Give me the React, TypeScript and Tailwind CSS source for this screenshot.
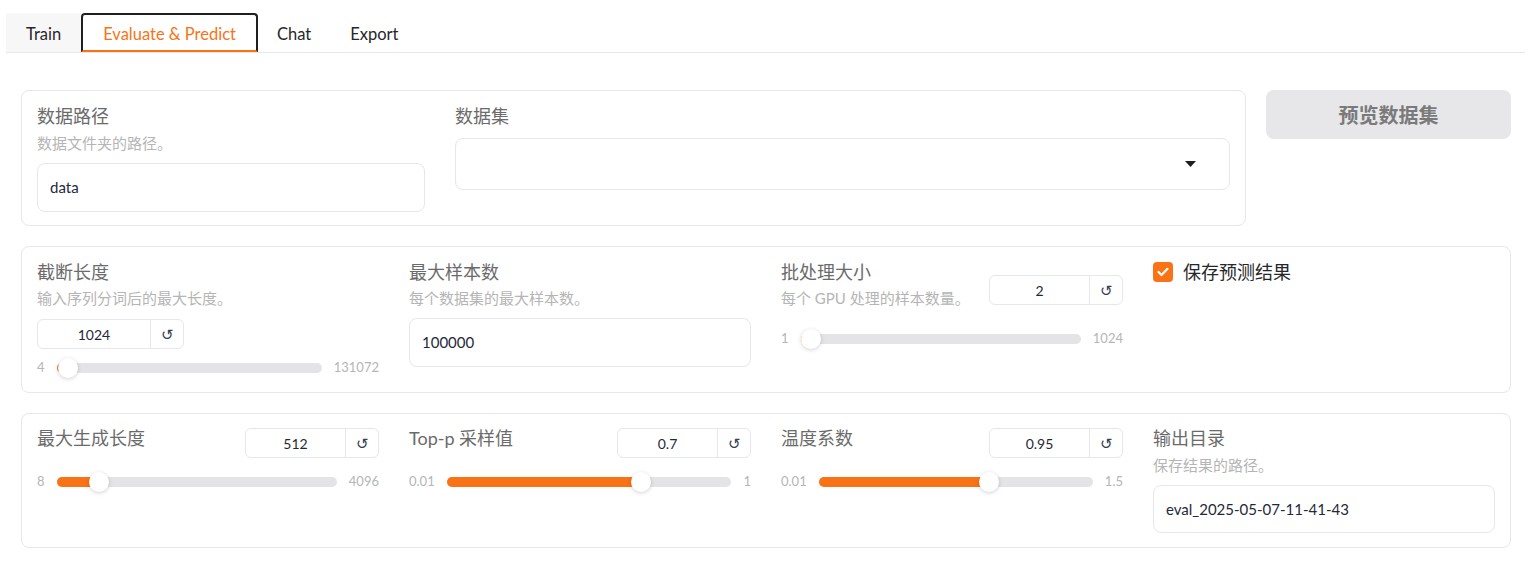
import React from 'react'

const font = { fontFamily: 'Lato, "Noto Sans CJK SC", sans-serif' }

function Label({ children }: { children: React.ReactNode }) {
  return <div className="text-[18px] leading-[22px] text-[#6b6b6b]">{children}</div>
}

function Info({ children, className = '' }: { children: React.ReactNode; className?: string }) {
  return <div className={`text-[15px] leading-[20px] text-[#b5b5b5] ${className}`}>{children}</div>
}

function NumberBox({ value, className = '' }: { value: string; className?: string }) {
  return (
    <div className={`flex h-[30px] w-[134px] shrink-0 rounded-md border border-[#e5e7eb] bg-white ${className}`}>
      <div className="flex flex-1 items-center justify-center text-[14px] text-[#1f2937]">{value}</div>
      <div className="flex w-[33px] items-center justify-center border-l border-[#e5e7eb] text-[15px] text-[#374151]">↺</div>
    </div>
  )
}

function Slider({ min, max, pct, className = '' }: { min: string; max: string; pct: number; className?: string }) {
  return (
    <div className={`flex h-[20px] items-center gap-[12px] text-[13px] text-[#b5b5b5] ${className}`}>
      <span>{min}</span>
      <div className="relative h-[10px] flex-1 rounded-full bg-[#e4e4e7]">
        <div
          className="absolute left-0 top-0 h-[10px] rounded-full bg-[#f97316]"
          style={{ width: `calc(${pct * 100}% - ${pct * 20}px + 10px)` }}
        />
        <div
          className="absolute top-[-5px] h-[20px] w-[20px] rounded-full bg-white shadow-[0_1px_4px_rgba(0,0,0,0.18)]"
          style={{ left: `calc(${pct * 100}% - ${pct * 20}px)` }}
        />
      </div>
      <span>{max}</span>
    </div>
  )
}

function TextInput({ value, className = '' }: { value: string; className?: string }) {
  return (
    <div className={`flex items-center rounded-lg border border-[#e5e7eb] bg-white px-[12px] text-[15px] text-[#1f2937] ${className}`}>
      {value}
    </div>
  )
}

export default function App() {
  return (
    <div className="min-h-screen bg-white pt-[13px]" style={font}>
      {/* Tabs */}
      <div className="mx-[6px] mr-[5px] flex border-b border-[#e5e7eb] text-[16.5px]">
        <div className="flex h-[39px] items-center bg-[#f7f7f8] px-[20px] pt-[3px] text-[#27272a]">Train</div>
        <div className="flex h-[39px] items-center rounded-t-[4px] border-2 border-[#1f1f1f] border-b-[#f97316] px-[20px] pt-[3px] text-[#f97316]">
          Evaluate &amp; Predict
        </div>
        <div className="flex h-[39px] items-center px-[19px] pt-[3px] text-[#27272a]">Chat</div>
        <div className="flex h-[39px] items-center px-[20px] pt-[3px] text-[#27272a]">Export</div>
      </div>

      <div className="mt-[37px] flex flex-col gap-[20px] pl-[21px] pr-[19px]">
        {/* Row 1 */}
        <div className="flex gap-[20px]">
          <div className="flex flex-1 gap-[30px] rounded-lg border border-[#e5e7eb] px-[15px] pb-[13px] pt-[14px]">
            <div className="w-[388px]">
              <Label>数据路径</Label>
              <Info className="mt-[6px]">数据文件夹的路径。</Info>
              <TextInput value="data" className="mt-[10px] h-[49px]" />
            </div>
            <div className="flex-1">
              <Label>数据集</Label>
              <div className="mt-[11px] flex h-[52px] items-center justify-end rounded-lg border border-[#e5e7eb] pr-[33px]">
                <svg width="11" height="6" viewBox="0 0 11 6">
                  <path d="M0 0 L11 0 L5.5 6 Z" fill="#1f1f1f" />
                </svg>
              </div>
            </div>
          </div>
          <div className="w-[245px]">
            <div className="flex h-[49px] items-center justify-center rounded-lg bg-[#e7e7e9] text-[20px] font-bold text-[#7a7a7a]">
              预览数据集
            </div>
          </div>
        </div>

        {/* Row 2 */}
        <div className="grid grid-cols-4 gap-[30px] rounded-lg border border-[#e5e7eb] px-[15px] pb-[14px] pt-[14px]">
          <div>
            <Label>截断长度</Label>
            <Info className="mt-[5px]">输入序列分词后的最大长度。</Info>
            <NumberBox value="1024" className="mt-[11px] w-[147px]" />
            <Slider min="4" max="131072" pct={(1024 - 4) / (131072 - 4)} className="mt-[9px]" />
          </div>
          <div>
            <Label>最大样本数</Label>
            <Info className="mt-[5px]">每个数据集的最大样本数。</Info>
            <TextInput value="100000" className="mt-[10px] h-[49px]" />
          </div>
          <div>
            <div className="flex items-start justify-between">
              <div>
                <Label>批处理大小</Label>
                <Info className="mt-[5px]">每个 GPU 处理的样本数量。</Info>
              </div>
              <NumberBox value="2" className="mt-[14px]" />
            </div>
            <Slider min="1" max="1024" pct={(2 - 1) / (1024 - 1)} className="mt-[21px]" />
          </div>
          <div>
            <div className="flex h-[22px] items-center gap-[10px]">
              <div className="flex h-[20px] w-[20px] items-center justify-center rounded-[4px] bg-[#f97316]">
                <svg width="12" height="10" viewBox="0 0 12 10">
                  <path d="M1.5 5 L4.5 8 L10.5 1.8" fill="none" stroke="white" strokeWidth="2.2" strokeLinecap="round" strokeLinejoin="round" />
                </svg>
              </div>
              <span className="text-[18px] text-[#27272a]">保存预测结果</span>
            </div>
          </div>
        </div>

        {/* Row 3 */}
        <div className="grid grid-cols-4 gap-[30px] rounded-lg border border-[#e5e7eb] px-[15px] pb-[14px] pt-[13px]">
          <div>
            <div className="flex items-start justify-between">
              <Label>最大生成长度</Label>
              <NumberBox value="512" className="mt-[1px]" />
            </div>
            <Slider min="8" max="4096" pct={(512 - 8) / (4096 - 8)} className="mt-[14px]" />
          </div>
          <div>
            <div className="flex items-start justify-between">
              <Label>Top-p 采样值</Label>
              <NumberBox value="0.7" className="mt-[1px]" />
            </div>
            <Slider min="0.01" max="1" pct={(0.7 - 0.01) / 0.99} className="mt-[14px]" />
          </div>
          <div>
            <div className="flex items-start justify-between">
              <Label>温度系数</Label>
              <NumberBox value="0.95" className="mt-[1px]" />
            </div>
            <Slider min="0.01" max="1.5" pct={(0.95 - 0.01) / 1.49} className="mt-[14px]" />
          </div>
          <div>
            <Label>输出目录</Label>
            <Info className="mt-[6px]">保存结果的路径。</Info>
            <TextInput value="eval_2025-05-07-11-41-43" className="mt-[10px] h-[48px]" />
          </div>
        </div>
      </div>
    </div>
  )
}
